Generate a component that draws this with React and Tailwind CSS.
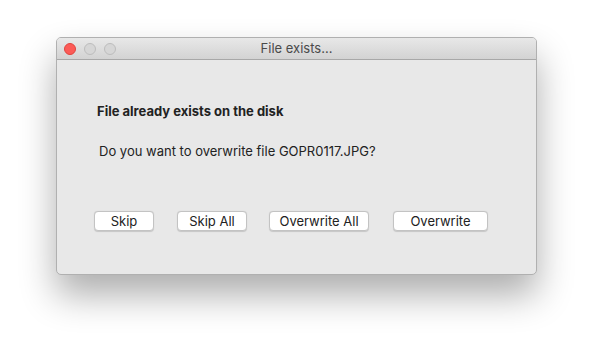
export default function App() {
  const font = { fontFamily: '"Inter", "Liberation Sans", Arial, sans-serif' };
  const btn =
    "h-[20px] bg-white border border-[#c3c3c3] rounded-[4px] text-[13px] text-[#222] leading-none flex items-center justify-center shadow-[0_0.5px_1px_rgba(0,0,0,0.15)]";
  return (
    <div className="w-[592px] h-[349px] bg-white pt-[37px] pl-[56px]" style={font}>
      <div className="w-[481px] h-[238px] rounded-[5px] border border-[#b0b0b0] bg-[#e8e8e8] overflow-hidden shadow-[0_20px_36px_rgba(0,0,0,0.32)] flex flex-col">
        <div className="h-[22px] relative bg-gradient-to-b from-[#e8e8e8] to-[#d3d3d3] border-b border-[#a8a8a8] flex items-center justify-center">
          <div className="absolute left-[7px] top-[5px] flex gap-[8px]">
            <div className="w-[12px] h-[12px] rounded-full bg-[#fc5b57] border border-[#e0443e]" />
            <div className="w-[12px] h-[12px] rounded-full bg-[#d6d6d6] border border-[#bdbdbd]" />
            <div className="w-[12px] h-[12px] rounded-full bg-[#d6d6d6] border border-[#bdbdbd]" />
          </div>
          <span className="text-[13px] text-[#4a4a4a]">File exists...</span>
        </div>
        <div className="flex flex-col pl-[40px] pt-[43px]">
          <div className="text-[13px] font-bold text-[#222] leading-[16px]">File already exists on the disk</div>
          <div className="text-[13px] text-[#222] leading-[16px] mt-[24px] ml-[2px]">
            Do you want to overwrite file GOPR0117.JPG?
          </div>
        </div>
        <div className="flex pl-[37px] mt-[52px]">
          <button className={`${btn} w-[60px]`}>Skip</button>
          <button className={`${btn} w-[70px] ml-[23px]`}>Skip All</button>
          <button className={`${btn} w-[100px] ml-[22px]`}>Overwrite All</button>
          <button className={`${btn} w-[95px] ml-[24px]`}>Overwrite</button>
        </div>
      </div>
    </div>
  );
}
